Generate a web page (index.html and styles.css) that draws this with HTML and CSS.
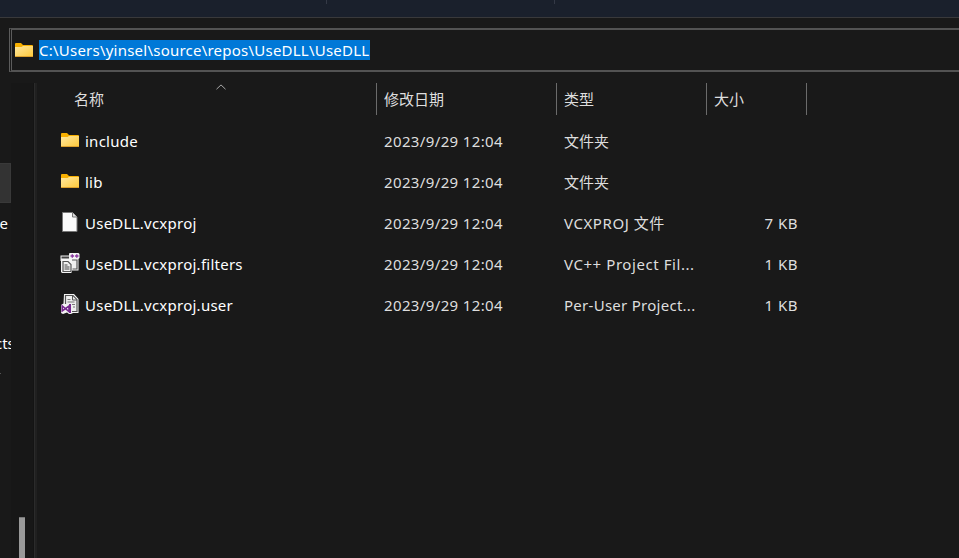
FILE: index.html
```html
<!DOCTYPE html>
<html lang="zh-CN">
<head>
<meta charset="utf-8">
<title>UseDLL</title>
<link rel="stylesheet" href="styles.css">
</head>
<body>
<svg class="defs" width="0" height="0">
  <defs>
    <linearGradient id="fold" x1="0" y1="0" x2="1" y2="1"><stop offset="0" stop-color="#ffe8a0"/><stop offset="1" stop-color="#fdc838"/></linearGradient>
    <symbol id="folder" viewBox="0 0 18 14">
      <path d="M0 1q0-1 1-1h5l2 2h9q1 0 1 1v10H0z" fill="#f8b000"/>
      <path d="M0 4h6.5l1.500-1h10v11H0z" fill="url(#fold)"/>
      <path d="M0 13.5h18" stroke="#dca02c"/>
    </symbol>
  </defs>
</svg>
<div class="window">
  <header class="titlebar"><i></i><i></i></header>
  <div class="address">
    <div class="address-box">
      <svg class="folder"><use href="#folder"/></svg>
      <span class="path">C:\Users\yinsel\source\repos\UseDLL\UseDLL</span>
    </div>
  </div>
  <div class="body">
    <nav class="tree">
      <div class="tree-selected"></div>
      <div class="tree-item"><span>e</span></div>
      <div class="tree-item tree-projects"><span>cts</span></div>
      <div class="tree-mark"></div>
    </nav>
    <div class="scroll"><div class="thumb"></div></div>
    <div class="splitter"></div>
    <main class="files">
      <div class="head">
        <div class="col name">名称<svg class="sort" viewBox="0 0 10 6"><path d="M.5 5.2 5 .9l4.500 4.300" fill="none" stroke="#aaa"/></svg></div>
        <div class="col date">修改日期</div>
        <div class="col type">类型</div>
        <div class="col size">大小</div>
      </div>
      <div class="row">
        <div class="icon"><svg class="folder"><use href="#folder"/></svg></div>
        <div class="label">include</div><div class="date">2023/9/29 12:04</div><div class="type">文件夹</div><div class="size"></div>
      </div>
      <div class="row">
        <div class="icon"><svg class="folder"><use href="#folder"/></svg></div>
        <div class="label">lib</div><div class="date">2023/9/29 12:04</div><div class="type">文件夹</div><div class="size"></div>
      </div>
      <div class="row">
        <div class="icon"><svg class="doc" viewBox="0 0 20 20"><path d="M2.500.5h10l4.500 4.500v14.500H2.500z" fill="#fafafa" stroke="#777"/><path d="M12.500.5v4.500H17" fill="#ddd" stroke="#777"/></svg></div>
        <div class="label">UseDLL.vcxproj</div><div class="date">2023/9/29 12:04</div><div class="type wide">VCXPROJ 文件</div><div class="size">7 KB</div>
      </div>
      <div class="row">
        <div class="icon"><svg class="doc" viewBox="0 0 20 20">
          <path d="M.5 2.500H9V.5L10 0h8.500l1 1v4l-1 1v11.500H12V19l-1 1H2l-1-1V8H.5z" fill="#f4f4f4"/>
          <path d="M1.500 3.500H9v2H1.500z" fill="#444"/>
          <path d="M12 7h5v9h-4.500M3 8.500h5l3 3v7H3z" fill="#eee" stroke="#555" stroke-width="1.200"/>
          <path d="M4.500 12h3M4.500 14h5M4.500 16h5" stroke="#444"/>
          <path d="M10.500 3h3.600M12.300 1.200v3.600M15 3h3.600M16.800 1.200v3.600" stroke="#8b3aa0" stroke-width="1.400"/>
        </svg></div>
        <div class="label">UseDLL.vcxproj.filters</div><div class="date">2023/9/29 12:04</div><div class="type wide">VC++ Project Fil...</div><div class="size">1 KB</div>
      </div>
      <div class="row">
        <div class="icon"><svg class="doc" viewBox="0 0 20 20">
          <path d="M4 0h10l4.500 5v14H13l-2 1H9l-2-1.500L3 20l-2-1v-8l2.500-1.500z" fill="#f4f4f4"/>
          <path d="M5.500 10V1.500h7.500L17 5.700V17.500h-5" fill="#eee" stroke="#555" stroke-width="1.200"/>
          <path d="M12.500 2v4H17" fill="none" stroke="#555"/>
          <path d="M7.500 5.500h3M7.500 8h7M12 10.500h3M13 13h2" stroke="#777"/>
          <path d="M2.200 12v5L9 12v5.500z" fill="#fff" stroke="#75288d" stroke-width="1.600"/><path d="M10 10v9" stroke="#75288d" stroke-width="2"/>
        </svg></div>
        <div class="label">UseDLL.vcxproj.user</div><div class="date">2023/9/29 12:04</div><div class="type user">Per-User Project...</div><div class="size">1 KB</div>
      </div>
    </main>
  </div>
</div>
</body>
</html>
```
FILE: styles.css
```css
* { box-sizing: border-box; }
body { margin: 0; background: #191919; color: #dedede; font: 15px/20px "Noto Sans", "Noto Sans CJK SC", sans-serif; overflow: hidden; }
.defs { position: absolute; }
.window { width: 959px; height: 558px; display: flex; flex-direction: column; overflow: hidden; }
.titlebar { height: 18px; flex: none; background: #1a202c; border-bottom: 1px solid #39393b; display: flex; padding-left: 326px; gap: 227px; }
.titlebar i { width: 1px; height: 4px; background: #343946; }
.address { height: 65px; flex: none; padding: 10px 0 0 9px; }
.address-box { height: 44px; border: 2px solid #535353; border-right: 0; border-left: 3px double #5c5c5c; display: flex; align-items: center; padding-left: 3px; }
.folder { width: 18px; height: 14px; display: block; }
.path { margin-left: 6px; width: 331px; height: 20px; background: #0078d7; color: #fff; white-space: nowrap; letter-spacing: .23px; }
.body { flex: 1; display: flex; min-height: 0; }
.tree { width: 11px; overflow: hidden; padding-top: 80px; color: #fff; }
.tree-selected { height: 40px; background: #333; border: 1px solid #393939; border-left: 0; }
.tree-item { height: 41px; display: flex; align-items: center; justify-content: flex-end; padding: 0 3px 2px 0; }
.tree-projects { margin-top: 79px; justify-content: flex-start; }
.tree-projects span { margin-left: -5px; }
.tree-mark { width: 1px; height: 1px; margin-top: 9px; background: #555; }
.scroll { width: 22px; background: #171717; padding: 434px 0 0 8px; }
.thumb { width: 6px; height: 41px; background: #999; border-top: 1px solid #777; }
.splitter { width: 4px; background: linear-gradient(90deg, #141414 25%, #2b2b2b 25% 50%, #202020 50%); }
.files { flex: 1; }
.head { height: 37px; display: flex; }
.col { height: 32px; padding: 6px 0 0 7px; border-right: 1px solid #6b6b6b; }
.head .name { width: 340px; padding-left: 37px; position: relative; }
.sort { position: absolute; left: 179px; top: 1px; width: 10px; height: 6px; }
.head .date { width: 180px; }
.head .type { width: 150px; }
.head .size { width: 100px; }
.row { height: 41px; display: flex; align-items: center; padding-left: 23px; white-space: nowrap; }
.icon { width: 25px; height: 22px; padding-left: 1px; }
.icon .folder { margin-top: 3px; }
.doc { width: 20px; height: 20px; display: block; margin-left: -1px; }
.label { width: 299px; color: #fff; letter-spacing: .25px; }
.row .date { width: 180px; letter-spacing: .37px; }
.row .type { width: 150px; }
.row .wide { letter-spacing: .57px; }
.row .user { letter-spacing: .27px; }
.row .size { width: 84px; text-align: right; letter-spacing: .5px; }
```
